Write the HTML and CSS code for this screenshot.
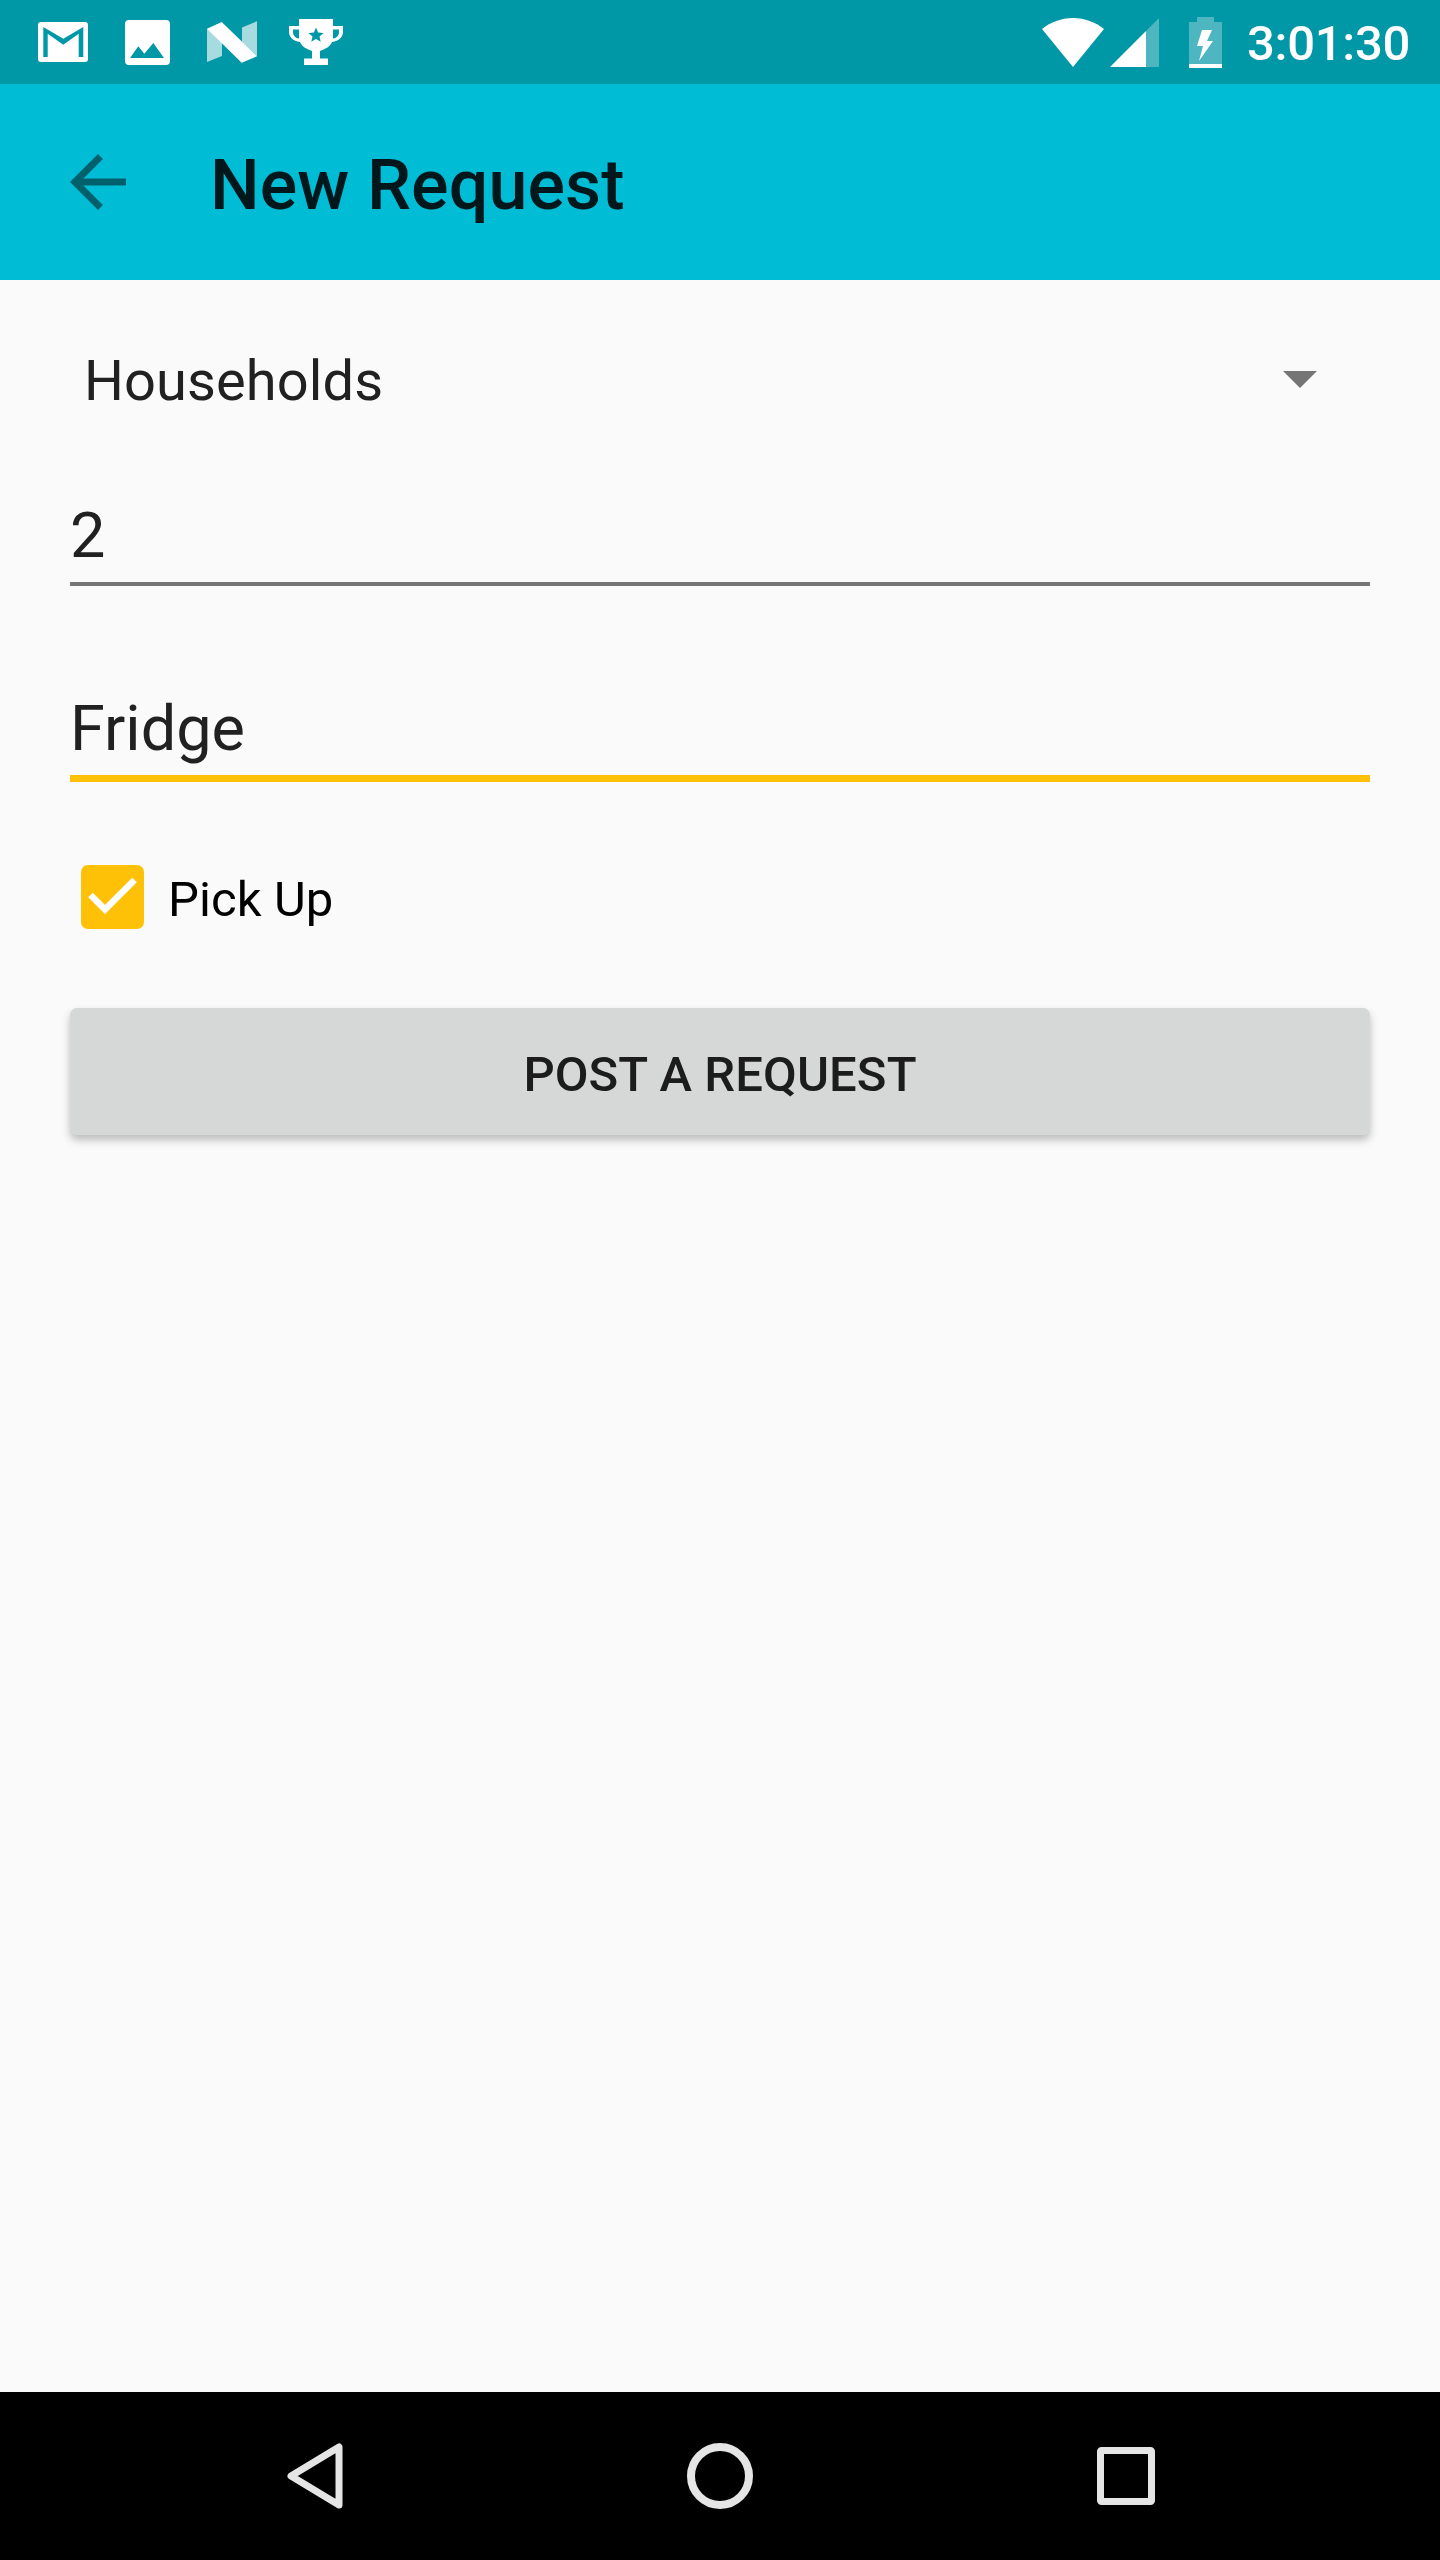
FILE: index.html
```html
<!DOCTYPE html>
<html lang="en">
<head>
  <meta charset="UTF-8">
  <meta name="viewport" content="width=device-width, initial-scale=1.0">
  <title>New Request</title>
  <link rel="stylesheet" href="styles.css">
</head>
<body>
  <div class="phone">
    <div class="status-bar">
      <div class="status-left">
        <svg class="ic-gmail" width="50" height="40" viewBox="0 0 50 40">
          <path fill="#fff" fill-rule="evenodd" d="M3 0H47a3 3 0 0 1 3 3V37a3 3 0 0 1-3 3H3a3 3 0 0 1-3-3V3a3 3 0 0 1 3-3ZM5.300 5V35H9.700V11.700L25.300 22.700L40.700 11.700V35H45.300V5L25.300 16.700Z"/>
        </svg>
        <svg class="ic-picture" width="45" height="45" viewBox="0 0 45 45">
          <path fill="#fff" fill-rule="evenodd" d="M4 0H41a4 4 0 0 1 4 4V41a4 4 0 0 1-4 4H4a4 4 0 0 1-4-4V4a4 4 0 0 1 4-4ZM5 38H39L28.300 23L19.300 33.700L13.300 26.300Z"/>
        </svg>
        <svg class="ic-nougat" width="50" height="42" viewBox="0 0 50 42">
          <path fill="#fff" opacity=".65" d="M0 7.700L15 14V35L0 41Z"/>
          <path fill="#fff" opacity=".65" d="M35 6.500L50 .3V35.300L35 21Z"/>
          <path fill="#fff" d="M0 7.700L14.700 1L50 35.300L34.700 41.700Z"/>
        </svg>
        <svg class="ic-trophy" width="54" height="48" viewBox="0 0 54 48">
          <path fill="#fff" fill-rule="evenodd" d="M10 1H44V8H54V14C54 19 50 23 43 24C41 29 36 31 31 33V40.500H39V47H15V40.500H23V33C18 31 13 29 11 24C4 23 0 19 0 14V8H10ZM4 11.500V14C4 17 6 20 10 20.500V11.500ZM44 11.500V20.500C48 20 50 17 50 14V11.500ZM27 9.500L29.100 14.500L34.600 14.900L30.500 18.500L31.700 23.800L27 21L22.300 23.800L23.500 18.500L19.400 14.900L24.900 14.500Z"/>
        </svg>
      </div>
      <div class="status-right">
        <svg class="ic-wifi" width="62" height="49" viewBox="0 0 62 49">
          <path fill="#fff" d="M0 11C9 4 19 0 31 0C43 0 53 4 62 11L31 49Z"/>
        </svg>
        <svg class="ic-signal" width="49" height="49" viewBox="0 0 49 49">
          <path fill="#fff" opacity=".3" d="M49 0V49H36V13Z"/>
          <path fill="#fff" d="M36 13V49H0Z"/>
        </svg>
        <svg class="ic-battery" width="33" height="51" viewBox="0 0 33 51">
          <path fill="#fff" opacity=".3" d="M8 0H25V5H33V47H0V5H8Z"/>
          <path fill="#fff" d="M0 47H33V51H0Z"/>
          <path fill="#fff" d="M13 13H23L18 24H24L10 44L14 29H8Z"/>
        </svg>
        <span class="clock">3:01:30</span>
      </div>
    </div>

    <div class="app-bar">
      <svg class="back-arrow" width="84" height="84" viewBox="0 0 24 24">
        <path d="M20 11H7.830l5.590-5.590L12 4l-8 8 8 8 1.410-1.410L7.830 13H20v-2z"/>
      </svg>
      <h1 class="app-title">New Request</h1>
    </div>

    <div class="content">
      <div class="spinner">
        <span class="spinner-label">Households</span>
        <span class="spinner-arrow"></span>
      </div>
      <div class="field">2</div>
      <div class="field field-active">Fridge</div>
      <div class="check-row">
        <svg class="checkbox" width="63" height="64" viewBox="0 0 63 64">
          <rect width="63" height="64" rx="7" fill="#ffc107"/>
          <path d="M9.500 30L24 44.500L53.500 15" fill="none" stroke="#fff" stroke-width="6.500"/>
        </svg>
        <span class="check-label">Pick Up</span>
      </div>
      <button class="post-btn">POST A REQUEST</button>
    </div>

    <div class="nav-bar">
      <svg width="56" height="66" viewBox="0 0 56 66">
        <path d="M52 4V62L4 33Z" fill="none" stroke="#e5e5e5" stroke-width="7" stroke-linejoin="round"/>
      </svg>
      <svg width="66" height="66" viewBox="0 0 66 66">
        <circle cx="33" cy="33" r="29" fill="none" stroke="#e5e5e5" stroke-width="8"/>
      </svg>
      <svg width="58" height="58" viewBox="0 0 58 58">
        <rect x="3.500" y="3.500" width="51" height="51" rx="1" fill="none" stroke="#e5e5e5" stroke-width="7"/>
      </svg>
    </div>
  </div>
</body>
</html>
```

FILE: styles.css
```css
body {
  margin: 0;
  padding: 0;
  font-family: Roboto, "Noto Sans", sans-serif;
  background-color: #fafafa;
}
.phone {
  display: flex;
  flex-direction: column;
  width: 1440px;
  height: 2560px;
  overflow: hidden;
}
.status-bar {
  display: flex;
  justify-content: space-between;
  align-items: center;
  height: 84px;
  padding: 0 30px 0 38px;
  box-sizing: border-box;
  background-color: #0097a7;
}
.status-left, .status-right {
  display: flex;
  align-items: center;
}
.ic-picture { margin-left: 37px; }
.ic-nougat { margin-left: 37px; }
.ic-trophy { margin-left: 32px; }
.ic-signal { margin-left: 6px; }
.ic-battery { margin-left: 30px; }
.clock {
  margin: 3px 0 0 25px;
  font-size: 49px;
  font-weight: 500;
  letter-spacing: -0.3px;
  color: #fff;
}
.app-bar {
  display: flex;
  align-items: center;
  height: 196px;
  padding-left: 56px;
  box-sizing: border-box;
  background-color: #00bcd4;
}
.back-arrow {
  fill: #00606c;
}
.app-title {
  margin: 6px 0 0 70px;
  font-size: 70px;
  font-weight: 500;
  letter-spacing: 0.1px;
  color: #00171b;
}
.content {
  flex: 1;
  padding: 0 70px;
}
.spinner {
  display: flex;
  justify-content: space-between;
  align-items: center;
  height: 200px;
  padding: 0 53px 0 14px;
  font-size: 56px;
  color: #212121;
}
.spinner-label {
  margin-top: 2px;
  letter-spacing: 0.1px;
}
.spinner-arrow {
  width: 0;
  height: 0;
  margin-top: -2px;
  border-left: 17px solid transparent;
  border-right: 17px solid transparent;
  border-top: 17px solid #757575;
}
.field {
  height: 106px;
  padding-top: 20px;
  font-size: 63px;
  line-height: 71px;
  color: #212121;
  border-bottom: 4px solid #757575;
  box-sizing: border-box;
}
.field-active {
  margin-top: 90px;
  padding-top: 17px;
  border-bottom: 7px solid #ffc107;
}
.check-row {
  display: flex;
  align-items: center;
  gap: 24px;
  margin-top: 83px;
  padding-left: 11px;
  font-size: 49px;
  color: #000;
}
.check-label {
  margin-top: 4px;
  letter-spacing: 0.1px;
}
.post-btn {
  display: block;
  width: 100%;
  height: 127px;
  margin-top: 79px;
  padding: 6px 0 0;
  border: none;
  border-radius: 7px;
  background-color: #d6d7d7;
  box-shadow: 0 5px 9px rgba(0, 0, 0, 0.25);
  font-family: inherit;
  font-size: 49px;
  font-weight: 500;
  letter-spacing: 0.1px;
  color: #1c1c1c;
}
.nav-bar {
  display: flex;
  justify-content: space-between;
  align-items: center;
  height: 168px;
  padding: 0 285px 0 287px;
  box-sizing: border-box;
  background-color: #000;
}
```
